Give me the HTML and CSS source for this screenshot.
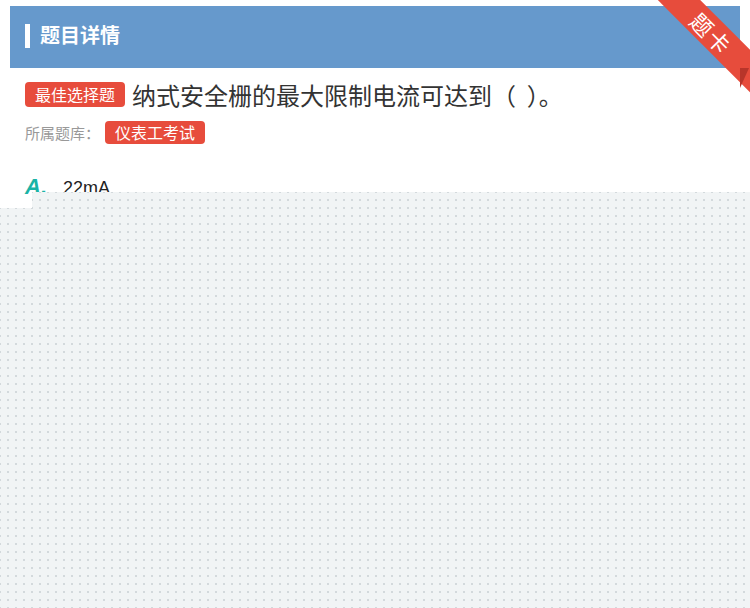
FILE: index.html
```html
<!DOCTYPE html>
<html lang="zh">
<head>
    <meta charset="UTF-8">
    <meta name="viewport" content="width=device-width, initial-scale=1.0">
    <title>题目详情</title>
    <link rel="stylesheet" href="styles.css">
</head>
<body>

    <div class="card">
        <div class="card-header">
            <span class="bar"></span>
            <h2>题目详情</h2>
        </div>
        <div class="question">
            <span class="tag">最佳选择题</span>
            <span class="q-text">纳式安全栅的最大限制电流可达到（&nbsp;&nbsp;）。</span>
        </div>
        <div class="bank">
            <span class="bank-label">所属题库：</span>
            <span class="tag tag-small">仪表工考试</span>
        </div>
        <div class="option">
            <span class="opt-letter">A.</span>
            <span class="opt-text">22mA</span>
        </div>
    </div>

    <div class="ribbon">
        <span>题卡</span>
    </div>
    <div class="ribbon-fold"></div>

    <div class="mask mask-top"></div>
    <div class="mask mask-bottom"></div>

</body>
</html>
```

FILE: styles.css
```css
body {
    font-family: "Liberation Sans", "Noto Sans CJK SC", sans-serif;
    background-color: #fff;
    margin: 0;
    padding: 0;
    overflow: hidden;
    height: 608px;
}
.card {
    margin: 6px 10px 0;
    background-color: #fff;
}
.card-header {
    display: flex;
    align-items: center;
    height: 58px;
    padding-bottom: 4px;
    background-color: #6699cc;
    padding-left: 15px;
}
.bar {
    width: 5px;
    height: 24px;
    margin-top: 1px;
    background-color: #fff;
    margin-right: 10px;
}
.card-header h2 {
    margin: 0;
    color: #fff;
    font-size: 20px;
    line-height: 24px;
    font-weight: bold;
    font-family: "Noto Sans CJK SC", sans-serif;
}
.question {
    display: flex;
    align-items: center;
    padding: 14px 15px 0;
}
.tag {
    display: inline-block;
    background-color: #e74c3c;
    color: #fff;
    font-size: 16px;
    line-height: 25px;
    padding: 0 10px;
    border-radius: 4px;
    font-family: "Noto Sans CJK SC", sans-serif;
}
.q-text {
    margin-left: 7px;
    font-size: 24px;
    line-height: 25px;
    color: #333;
    font-family: "Noto Sans CJK SC", sans-serif;
}
.bank {
    display: flex;
    align-items: center;
    padding: 14px 15px 0;
}
.bank-label {
    font-size: 15px;
    line-height: 23px;
    color: #999;
    margin-right: 5px;
    font-family: "Noto Sans CJK SC", sans-serif;
}
.tag-small {
    line-height: 23px;
}
.option {
    display: flex;
    align-items: baseline;
    padding: 30px 15px 0;
}
.opt-letter {
    width: 38px;
    color: #1ab3a6;
    font-size: 22px;
    line-height: 26px;
    font-weight: bold;
    font-style: italic;
}
.opt-text {
    font-size: 18px;
    color: #222;
}
.ribbon {
    position: absolute;
    top: 18px;
    left: 637px;
    width: 150px;
    height: 30px;
    background-color: #e74c3c;
    transform: rotate(45deg);
    display: flex;
    align-items: center;
    justify-content: center;
}
.ribbon span {
    color: #fff;
    font-size: 22px;
    letter-spacing: 2px;
    font-family: "Noto Sans CJK SC", sans-serif;
}
.ribbon-fold {
    position: absolute;
    top: 68px;
    left: 740px;
    width: 0;
    height: 0;
    border-left: 9px solid #b8352a;
    border-bottom: 20px solid transparent;
}
.mask {
    position: absolute;
    right: 0;
    background-color: #f1f4f5;
    background-image: radial-gradient(#d3d9dc 1px, transparent 1.2px);
    background-size: 8px 8px;
}
.mask-top {
    top: 192px;
    left: 32px;
    height: 16px;
    background-position: -4px 4px;
}
.mask-bottom {
    top: 208px;
    left: 0;
    bottom: 0;
    background-position: 4px 4px;
}
```
